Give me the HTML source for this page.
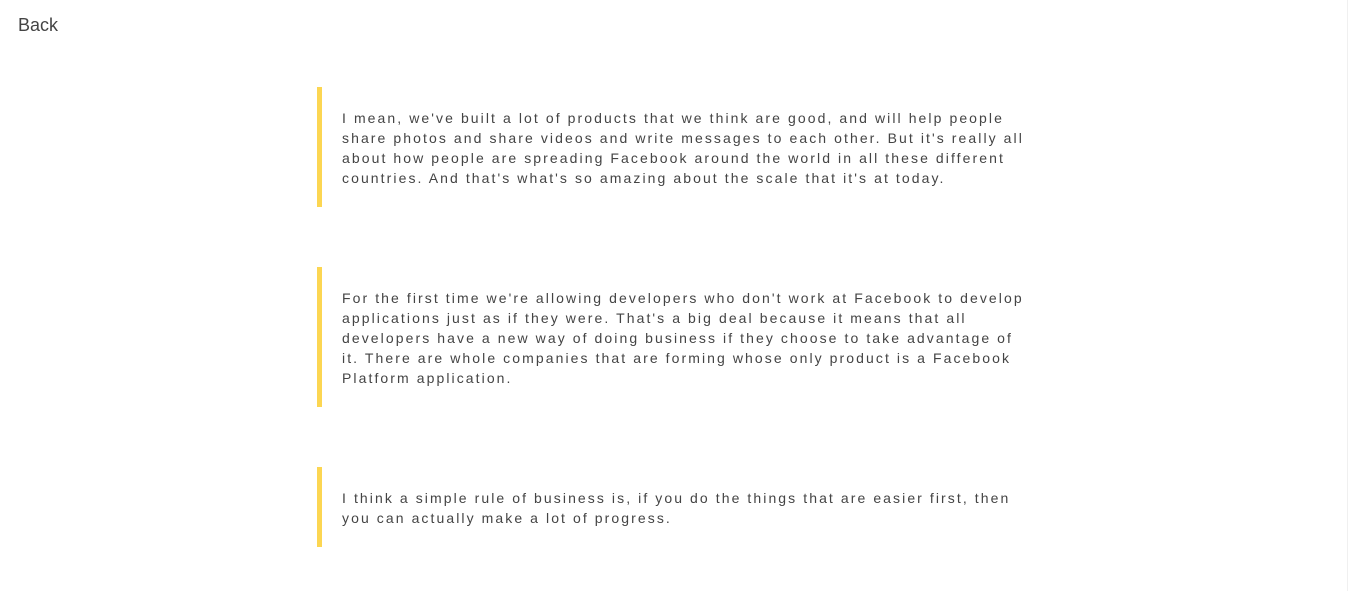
<!DOCTYPE html>
<html><head><meta charset="utf-8"><style>
html,body{margin:0;padding:0;background:#fff;width:1348px;height:591px;overflow:hidden;position:relative}
.back{position:absolute;left:18px;top:15px;font:18px "Liberation Sans",sans-serif;color:#444}
.q{position:absolute;left:317px;border-left:5px solid #fcd652;padding:21px 0 19px 20px;font:300 14px/20px "Liberation Sans",sans-serif;letter-spacing:2.08px;color:#444;white-space:nowrap}
.sb{position:absolute;right:0;top:0;width:1px;height:591px;background:#f0f0f0}
</style></head><body>
<div class="back">Back</div>
<div class="q" style="top:87px;height:80px">I mean, we've built a lot of products that we think are good, and will help people<br>share photos and share videos and write messages to each other. But it's really all<br>about how people are spreading Facebook around the world in all these different<br>countries. And that's what's so amazing about the scale that it's at today.</div>
<div class="q" style="top:267px;height:100px">For the first time we're allowing developers who don't work at Facebook to develop<br>applications just as if they were. That's a big deal because it means that all<br>developers have a new way of doing business if they choose to take advantage of<br>it. There are whole companies that are forming whose only product is a Facebook<br>Platform application.</div>
<div class="q" style="top:467px;height:40px">I think a simple rule of business is, if you do the things that are easier first, then<br>you can actually make a lot of progress.</div>
<div class="sb"></div>
</body></html>
